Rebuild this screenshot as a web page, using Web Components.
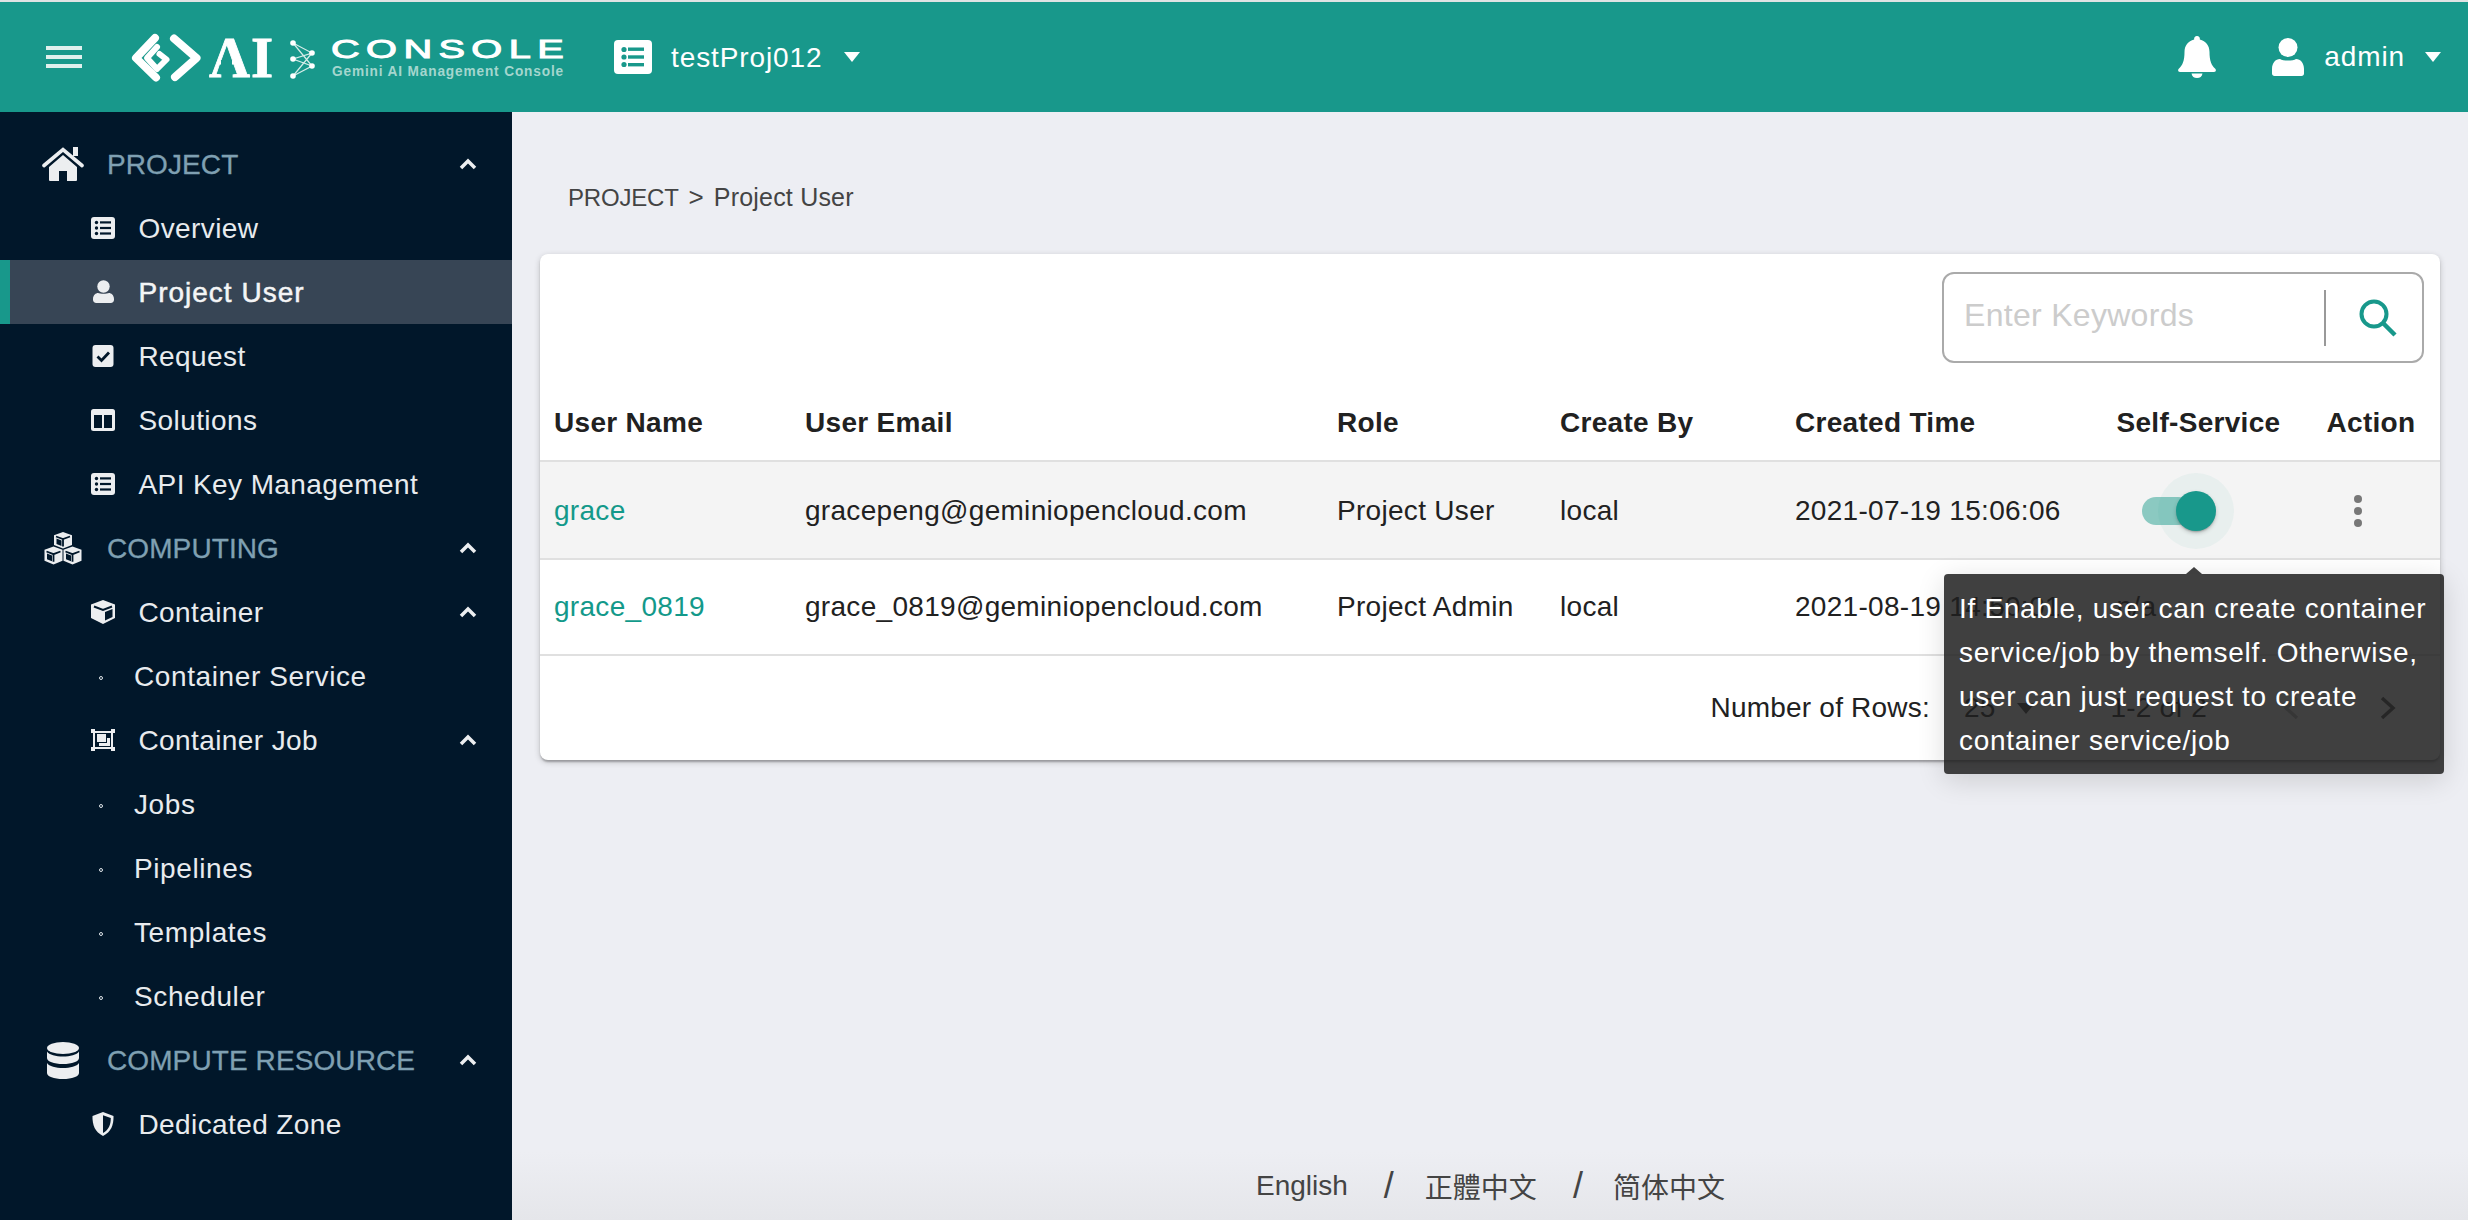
<!DOCTYPE html>
<html lang="en">
<head>
<meta charset="utf-8">
<title>AI Console</title>
<style>
  html,body{margin:0;padding:0;height:100%;overflow:hidden;background:#edeef3;}
  body{font-family:"Liberation Sans",Arial,"Noto Sans CJK TC",sans-serif;}
</style>
</head>
<body>
<app-shell>
  <top-bar slot="top"></top-bar>
  <side-nav slot="side"></side-nav>
  <bread-crumb>
    <span class="a">PROJECT</span><span class="sep">&gt;</span><span class="b">Project User</span>
  </bread-crumb>
  <user-table></user-table>
  <lang-foot slot="foot"></lang-foot>
</app-shell>

<script>
const ICONS = {
  home:`<svg width="42" height="34" viewBox="0 0 42 34"><path d="M31 0h5v9h-5z" fill="#eceef0"/><path d="M2 18.5 21 2.5 40 18.5" fill="none" stroke="#eceef0" stroke-width="3.6" stroke-linecap="round"/><path d="M7 20 21 8 35 20v13a1 1 0 0 1-1 1H25V24H17V34H8a1 1 0 0 1-1-1z" fill="#eceef0"/></svg>`,
  list:`<svg width="24" height="22" viewBox="0 0 24 22"><rect width="24" height="22" rx="3" fill="#eceef0"/><g fill="#01172a"><circle cx="5.500" cy="5.500" r="1.700"/><circle cx="5.500" cy="11" r="1.700"/><circle cx="5.500" cy="16.500" r="1.700"/><rect x="9" y="4.300" width="11" height="2.200"/><rect x="9" y="9.900" width="11" height="2.200"/><rect x="9" y="15.400" width="11" height="2.200"/></g></svg>`,
  person:`<svg width="24" height="24" viewBox="0 0 24 24"><circle cx="12.500" cy="6.500" r="6.200" fill="#eceef0"/><path d="M2 19c0-4 3-6 5-6 2 1 9 1 11 0 2 0 5 2 5 6v1c0 2-2 3-3 3H5c-1 0-3-1-3-3z" fill="#eceef0"/></svg>`,
  check:`<svg width="24" height="22" viewBox="0 0 24 22"><rect x="1.500" width="21" height="22" rx="3" fill="#eceef0"/><path d="M6.500 11.500 10.500 15.500 18 7.500" fill="none" stroke="#01172a" stroke-width="2.800"/></svg>`,
  columns:`<svg width="24" height="22" viewBox="0 0 24 22"><rect width="24" height="22" rx="2.500" fill="#eceef0"/><rect x="3" y="6" width="8" height="13" fill="#01172a"/><rect x="13" y="6" width="8" height="13" fill="#01172a"/></svg>`,
  cubes:`<svg width="38" height="33" viewBox="0 0 38 33" fill="#eceef0"><path d="M19 0l9 3.300v9.700l-9 3.500-9-3.500V3.300z"/><path d="M9.500 14.500l9 3.300v11l-9 3.700-9-3.700v-11z"/><path d="M28.500 14.500l9 3.300v11l-9 3.700-9-3.700v-11z"/><g fill="none" stroke="#01172a" stroke-width="1.800"><path d="M12 4.500l7 2.500 7-2.500M19 7v7.500"/><path d="M2.500 19.500l7 2.700 7-2.700M9.500 22.200v7.500"/><path d="M21.500 19.500l7 2.700 7-2.700M28.500 22.200v7.500"/></g><path d="M3 21.500l5 2v5.800l-5-2zM22 21.500l5 2v5.800l-5-2zM12.500 6.500l5 2v5.600l-5-2z" fill="#01172a"/></svg>`,
  cube:`<svg width="24" height="24" viewBox="0 0 24 24"><path d="M12 0 24 4.500V18L12 24 0 18V4.500z" fill="#eceef0"/><path d="M3 6.500 12 10 21 6.500" fill="none" stroke="#01172a" stroke-width="2"/><path d="M14 12 21.500 9v8L14 20.500z" fill="#01172a"/></svg>`,
  job:`<svg width="24" height="22" viewBox="0 0 24 22"><rect x="2" y="2" width="20" height="18" fill="#eceef0"/><rect x="0" y="0" width="4" height="4" fill="#eceef0"/><rect x="20" y="0" width="4" height="4" fill="#eceef0"/><rect x="0" y="18" width="4" height="4" fill="#eceef0"/><rect x="20" y="18" width="4" height="4" fill="#eceef0"/><path d="M4 4h16v14H4z" fill="#01172a"/><rect x="6" y="5" width="9" height="8" fill="#eceef0"/><path d="M16 9h3v8H8v-3h8z" fill="#eceef0"/></svg>`,
  db:`<svg width="32" height="37" viewBox="0 0 32 37" fill="#eceef0"><ellipse cx="16" cy="6" rx="16" ry="6"/><path d="M0 9.500C2 13 9 14.500 16 14.500S30 13 32 9.500V16c0 3.500-7 6-16 6S0 19.500 0 16z"/><path d="M0 21c2 3.500 9 5 16 5s14-1.500 16-5v10c0 3.500-7 6-16 6S0 34.500 0 31z"/></svg>`,
  shield:`<svg width="24" height="24" viewBox="0 0 24 24"><path d="M12 0 22.500 4c.3 9-2.500 16-10.500 20C4 20 1.200 13 1.500 4z" fill="#eceef0"/><path d="M12 3.200 19.800 6c0 6.500-2 11.800-7.800 15z" fill="#01172a"/></svg>`
};

function def(name, html, init){
  customElements.define(name, class extends HTMLElement{
    connectedCallback(){
      if(this.shadowRoot) return;
      const r=this.attachShadow({mode:'open'});
      r.innerHTML = typeof html==='function' ? html(this) : html;
      if(init) init(this,r);
    }
  });
}

def('app-shell',`<style>
  :host{display:flex;flex-direction:column;height:1220px;width:2468px;background:#edeef3;}
  .strip{height:2px;background:#dfe3e3;flex:none}
  .main{flex:1;display:flex;min-height:0}
  .side{flex:none;width:512px;display:flex}
  .content{flex:1;min-width:0;display:flex;flex-direction:column;position:relative}
  .foot{margin-top:auto}
</style>
<div class="strip"></div>
<slot name="top"></slot>
<div class="main">
  <div class="side"><slot name="side"></slot></div>
  <div class="content"><slot></slot><div class="foot"><slot name="foot"></slot></div></div>
</div>`);

def('logo-mark',`<style>:host{display:block;width:440px;height:50px;flex:none}svg{display:block;overflow:visible}</style>
<svg width="440" height="50" viewBox="130 32 440 50">
  <g fill="none" stroke="#fff" stroke-linejoin="round" stroke-linecap="round">
    <path d="M155 38 136 58 156 77.500" stroke-width="8"/>
    <path d="M157 47 147 58 157 69 166.500 59.500 159.500 54" stroke-width="6"/>
    <path d="M174 38.500 196.500 58 175 77" stroke-width="8"/>
  </g>
  <text x="209" y="77" font-family="'Liberation Serif',serif" font-size="58" font-weight="700" fill="#fff" stroke="#fff" stroke-width=".8" textLength="65" lengthAdjust="spacingAndGlyphs">AI</text>
  <rect x="221" y="60" width="11" height="5" fill="#18988b"/>
  <g stroke="#d5ece8" stroke-width="1.200" fill="none"><path d="M293 43 312 53 293 59 312 66 293 76M293 43 312 66M293 76 312 53M293 59 312 53"/></g>
  <g fill="#fff"><circle cx="293" cy="43" r="2.800"/><circle cx="312" cy="53" r="2.800"/><circle cx="293" cy="59" r="2.800"/><circle cx="312" cy="66" r="2.800"/><circle cx="293" cy="76" r="2.800"/></g>
  <text transform="translate(331,57.500) scale(1.500,1)" font-family="'Liberation Sans',sans-serif" font-size="26.500" fill="#fff" stroke="#fff" stroke-width="1" textLength="156" lengthAdjust="spacing">CONSOLE</text>
  <text x="332" y="76" font-family="'Liberation Sans',sans-serif" font-weight="700" font-size="14.500" fill="#a4d6ce" textLength="232" lengthAdjust="spacingAndGlyphs">Gemini AI Management Console</text>
</svg>`);

def('top-bar',`<style>
  :host{display:flex;align-items:center;height:110px;background:#18988b;color:#fff;flex:none;font:28px "Liberation Sans",Arial,sans-serif;letter-spacing:.9px}
  .burger{display:flex;flex-direction:column;gap:4.500px;width:36px;margin-left:46px;flex:none}
  .burger i{display:block;height:4.600px;background:#dff0ed}
  logo-mark{margin-left:48px}
  .proj{display:flex;align-items:center;margin-left:44px}
  .proj svg{display:block}
  .tri{width:0;height:0;border:8px solid transparent;border-top:10px solid #fff;border-bottom:0;flex:none}
  .t1{margin-left:19px;padding-top:2px}
  .proj .tri{margin-left:21px}
  .right{margin-left:auto;display:flex;align-items:center;padding-right:27px}
  .user{margin-left:56px}
  .name{margin-left:20px}
  .right .tri{margin-left:20px}
</style>
<div class="burger"><i></i><i></i><i></i></div>
<logo-mark></logo-mark>
<div class="proj">
  <svg width="38" height="34" viewBox="0 0 38 34"><rect width="38" height="34" rx="4" fill="#fff"/><g fill="#18988b"><circle cx="10" cy="9.500" r="2.600"/><circle cx="10" cy="17" r="2.600"/><circle cx="10" cy="24.500" r="2.600"/><rect x="14" y="7.500" width="16" height="3.400"/><rect x="14" y="15.300" width="16" height="3.400"/><rect x="14" y="23" width="16" height="3.400"/></g></svg>
  <span class="t1">testProj012</span><span class="tri"></span>
</div>
<div class="right">
  <svg width="38" height="42" viewBox="0 0 38 42"><path d="M19 0a2.800 2.800 0 0 1 2.800 3.400C28 5 31.500 9.500 31.500 16c0 8.500 2 13.500 5.500 16.500 1.500 1.300 1 3.500-1 3.500H2c-2 0-2.500-2.200-1-3.500C4.500 29.500 6.500 24.500 6.500 16 6.500 9.500 10 5 16.200 3.400A2.800 2.800 0 0 1 19 0z" fill="#fff"/><path d="M13.500 37.500h11C24 40.500 22 42 19 42s-5-1.500-5.500-4.500z" fill="#fff"/></svg>
  <svg class="user" width="32" height="38" viewBox="0 0 32 38"><circle cx="16" cy="9.500" r="9.500" fill="#fff"/><path d="M0 31c0-6 3.500-10 8-10 3 2 13 2 16 0 4.500 0 8 4 8 10v4.500c0 1.500-1 2.500-2.500 2.500h-27C1 38 0 37 0 35.500z" fill="#fff"/></svg>
  <span class="name">admin</span><span class="tri"></span>
</div>`);

def('nav-row',(el)=>{
  const kind=el.getAttribute('kind')||'item';
  const icon=el.getAttribute('icon');
  const chev=el.hasAttribute('open');
  return `<style>
  :host{display:flex;align-items:center;height:64px;flex:none;position:relative;box-sizing:border-box;padding-right:35px;color:#e8ebee;font:28px "Liberation Sans",Arial,sans-serif;letter-spacing:.4px}
  :host([kind=section]){padding-left:41px;color:#7fa0b2;letter-spacing:.1px;-webkit-text-stroke:.3px #7fa0b2}
  :host([kind=item]){padding-left:91px}
  :host([kind=sub]){padding-left:99px;letter-spacing:.6px}
  :host([active]){background:#374555;box-shadow:inset 10px 0 0 #18988b;color:#f4f5f6;-webkit-text-stroke:.5px #f4f5f6;letter-spacing:1px}
  .ic{display:flex;align-items:center;justify-content:center;flex:none;-webkit-text-stroke:0}
  :host([kind=section]) .ic{width:44px;margin-right:22px}
  :host([kind=item]) .ic{width:24px;margin-right:23.500px}
  :host([kind=sub]) .ic{width:4px;margin-right:31px}
  .lb{padding-top:2px}
  .dot{width:2px;height:2px;border:1px solid #dfe4e8;border-radius:50%;display:block;margin-top:3px}
  svg{display:block}
  .ch{margin-left:auto}
</style>
<span class="ic">${kind==='sub'?'<i class="dot"></i>':ICONS[icon]}</span><span class="lb"><slot></slot></span>
${chev?`<svg class="ch" width="18" height="12" viewBox="0 0 18 12"><path d="M2 10 9 3 16 10" fill="none" stroke="#eceef0" stroke-width="3.500"/></svg>`:''}`;
});

def('side-nav',`<style>
  :host{display:flex;flex-direction:column;width:512px;box-sizing:border-box;padding-top:20px;background:#01172a;flex:none;overflow:hidden}
</style>
<nav-row kind="section" icon="home" open>PROJECT</nav-row>
<nav-row kind="item" icon="list">Overview</nav-row>
<nav-row kind="item" icon="person" active>Project User</nav-row>
<nav-row kind="item" icon="check">Request</nav-row>
<nav-row kind="item" icon="columns">Solutions</nav-row>
<nav-row kind="item" icon="list">API Key Management</nav-row>
<nav-row kind="section" icon="cubes" open>COMPUTING</nav-row>
<nav-row kind="item" icon="cube" open>Container</nav-row>
<nav-row kind="sub">Container Service</nav-row>
<nav-row kind="item" icon="job" open>Container Job</nav-row>
<nav-row kind="sub">Jobs</nav-row>
<nav-row kind="sub">Pipelines</nav-row>
<nav-row kind="sub">Templates</nav-row>
<nav-row kind="sub">Scheduler</nav-row>
<nav-row kind="section" icon="db" open>COMPUTE RESOURCE</nav-row>
<nav-row kind="item" icon="shield">Dedicated Zone</nav-row>`);

def('bread-crumb',`<style>
  :host{display:block;flex:none;padding:71px 0 0 56px;height:71px;color:#444;font:24px/28px "Liberation Sans",Arial,sans-serif}
  ::slotted(span){margin-right:10px}
  ::slotted(.a){letter-spacing:-.2px}
  ::slotted(.sep){font-size:26px}
  ::slotted(.b){font-size:25px;letter-spacing:.2px}
</style><slot></slot>`);

def('toggle-switch',`<style>
  :host{display:block;position:relative;width:50px;height:28px;flex:none;margin-left:25px}
  .track{position:absolute;inset:0;border-radius:14px;background:#8bc9c1}
  .halo{position:absolute;left:16px;top:-24px;width:76px;height:76px;border-radius:50%;background:rgba(24,152,139,.05)}
  .thumb{position:absolute;left:34px;top:-6px;width:40px;height:40px;border-radius:50%;background:#18988b;box-shadow:0 2px 2px -1px rgba(0,0,0,.25),0 2px 4px rgba(0,0,0,.18)}
</style><span class="track"></span><span class="halo"></span><span class="thumb"></span>`);

def('kebab-icon',`<style>:host{display:block;width:8px;margin-left:27px;flex:none}i{display:block;width:8px;height:8px;border-radius:50%;background:#777;margin:4px 0}</style><i></i><i></i><i></i>`);

def('search-box',`<style>
  :host{display:flex;align-items:center;box-sizing:border-box;width:482px;height:91px;border:2px solid #aaa;border-radius:12px;flex:none;font:32px "Liberation Sans",Arial,sans-serif;color:#ccc;padding-left:20px;letter-spacing:.3px}
  .ph{flex:1;padding-bottom:4px}
  .div{width:2px;height:56px;background:#999;flex:none}
  svg{display:block;margin:0 25.500px 0 32.500px;flex:none}
</style><span class="ph">Enter Keywords</span><span class="div"></span>
<svg width="38" height="38" viewBox="0 0 38 38"><circle cx="15" cy="15" r="12.500" fill="none" stroke="#18988b" stroke-width="4"/><path d="M24 24 36 36" stroke="#18988b" stroke-width="4.500"/></svg>`);

def('data-cell',`<style>:host{display:flex;align-items:center;min-width:0;white-space:nowrap}</style><slot></slot>`);

def('table-row',`<style>
  :host{display:grid;grid-template-columns:251px 532px 223px 235px 321.500px 210px 1fr;padding-left:14px;box-sizing:border-box;align-items:center;border-bottom:2px solid #e0e0e0;color:#212121;font:28px "Liberation Sans",Arial,sans-serif;letter-spacing:.3px}
  :host([head]){height:80px;font-weight:700;padding-top:3px}
  :host([shade]){background:#f4f4f4;height:98px;padding-top:2px}
  :host([plain]){height:96px}
</style><slot></slot>`);

def('pager-bar',`<style>
  :host{display:flex;align-items:center;justify-content:flex-end;height:104px;padding-right:44px;color:#212121;font:28px "Liberation Sans",Arial,sans-serif;letter-spacing:.2px;white-space:nowrap}
  .count{margin-left:34px;display:flex;align-items:center}
  .tri{width:0;height:0;border:9px solid transparent;border-top:11px solid #444;border-bottom:0;margin-left:22px}
  .range{margin-left:75px}
  svg{display:block}
  .p{margin-left:76px}.n{margin-left:81px}
</style>
<span>Number of Rows:</span>
<span class="count"><span>25</span><span class="tri"></span></span>
<span class="range">1-2 of 2</span>
<svg class="p" width="16" height="24" viewBox="0 0 16 24"><path d="M14 2 3 12 14 22" fill="none" stroke="#bbb" stroke-width="3.500"/></svg>
<svg class="n" width="16" height="24" viewBox="0 0 16 24"><path d="M2 2 13 12 2 22" fill="none" stroke="#555" stroke-width="3.500"/></svg>`);

def('hint-tip',`<style>
  :host{position:absolute;left:1404px;top:320px;width:500px;height:200px;box-sizing:border-box;padding:13px 10px 11px 15px;background:rgba(30,30,30,.85);border-radius:4px;color:#fff;font:28px/44px "Liberation Sans",Arial,sans-serif;letter-spacing:.7px;box-shadow:0 6px 28px rgba(0,0,0,.14);z-index:5}
  :host::before{content:"";position:absolute;left:242px;top:-7px;width:0;height:0;border:8px solid transparent;border-bottom:7px solid rgba(30,30,30,.85);border-top:0}
</style><slot></slot>`);

def('user-table',`<style>
  :host{display:block;position:relative;margin:0 28px;height:506px;flex:none;background:#fff;border-radius:8px;box-shadow:0 2px 6px rgba(0,0,0,.2),0 2px 2px rgba(0,0,0,.14),0 4px 2px -2px rgba(0,0,0,.12)}
  .bar{display:flex;justify-content:flex-end;height:128px;box-sizing:border-box;padding:18px 16px 0 0}
  .link{color:#13998a}
</style>
<div class="bar"><search-box></search-box></div>
<table-row head><data-cell>User Name</data-cell><data-cell>User Email</data-cell><data-cell>Role</data-cell><data-cell>Create By</data-cell><data-cell>Created Time</data-cell><data-cell>Self-Service</data-cell><data-cell>Action</data-cell></table-row>
<table-row shade><data-cell><span class="link">grace</span></data-cell><data-cell>gracepeng@geminiopencloud.com</data-cell><data-cell>Project User</data-cell><data-cell>local</data-cell><data-cell>2021-07-19 15:06:06</data-cell><data-cell><toggle-switch></toggle-switch></data-cell><data-cell><kebab-icon></kebab-icon></data-cell></table-row>
<table-row plain><data-cell><span class="link">grace_0819</span></data-cell><data-cell>grace_0819@geminiopencloud.com</data-cell><data-cell>Project Admin</data-cell><data-cell>local</data-cell><data-cell>2021-08-19 14:50:01</data-cell><data-cell>n/a</data-cell><data-cell></data-cell></table-row>
<pager-bar></pager-bar>
<hint-tip>If Enable, user can create container service/job by themself. Otherwise, user can just request to create container service/job</hint-tip>`);

def('lang-foot',`<style>
  :host{display:flex;align-items:center;height:68px;box-sizing:border-box;padding:0 0 0 744px;color:#444;font:28px "Liberation Sans","Noto Sans CJK TC",Arial,sans-serif;background:linear-gradient(#edeef3,#e5e6ea)}
  .s{margin:0 31px 0 36px;font-size:36px;line-height:36px}
  .s2{margin-right:30px}
</style><span>English</span><span class="s">/</span><span lang="zh-TW">正體中文</span><span class="s s2">/</span><span lang="zh-CN" style='font-family:"Liberation Sans","Noto Sans CJK SC",sans-serif'>简体中文</span>`);
</script>
</body>
</html>
